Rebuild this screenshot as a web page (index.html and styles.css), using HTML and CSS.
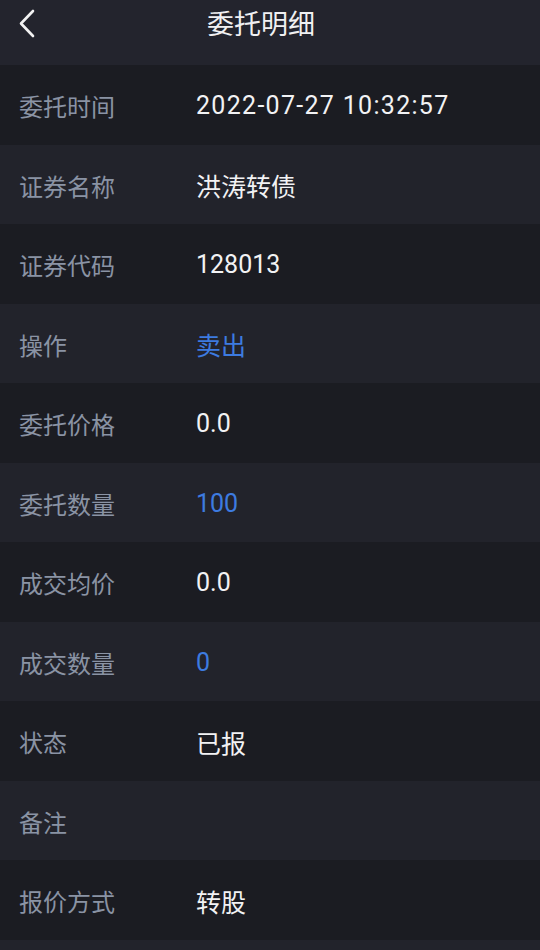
FILE: index.html
```html
<!DOCTYPE html>
<html lang="zh-CN">
<head>
    <meta charset="utf-8">
    <title>委托明细</title>
    <link rel="stylesheet" href="styles.css">
</head>
<body>
    <div class="nav-bar">
        <span class="back">
            <svg width="20" height="30" viewBox="0 0 20 30">
                <path d="M16 2 L4 14.5 L16 27" fill="none" stroke="#f2f2f2" stroke-width="2.6" stroke-linecap="round" stroke-linejoin="round"/>
            </svg>
        </span>
        <h1>委托明细</h1>
    </div>

    <div class="detail-list">
        <div class="row"><span class="label">委托时间</span><span class="value time">2022-07-27 10:32:57</span></div>
        <div class="row"><span class="label">证券名称</span><span class="value">洪涛转债</span></div>
        <div class="row"><span class="label">证券代码</span><span class="value">128013</span></div>
        <div class="row"><span class="label">操作</span><span class="value blue">卖出</span></div>
        <div class="row"><span class="label">委托价格</span><span class="value">0.0</span></div>
        <div class="row"><span class="label">委托数量</span><span class="value blue">100</span></div>
        <div class="row"><span class="label">成交均价</span><span class="value">0.0</span></div>
        <div class="row"><span class="label">成交数量</span><span class="value blue">0</span></div>
        <div class="row"><span class="label">状态</span><span class="value">已报</span></div>
        <div class="row"><span class="label">备注</span><span class="value"></span></div>
        <div class="row"><span class="label">报价方式</span><span class="value">转股</span></div>
    </div>
</body>
</html>
```

FILE: styles.css
```css
body {
    margin: 0;
    background-color: #22232b;
    font-family: Roboto, "Noto Sans CJK SC", sans-serif;
    color: #f0f0f2;
}
.nav-bar {
    height: 65px;
    background-color: #23242d;
    display: flex;
    align-items: flex-start;
    justify-content: center;
    position: relative;
}
.nav-bar h1 {
    margin: 0 18px 0 0;
    padding-top: 6px;
    font-size: 27px;
    font-weight: normal;
    line-height: 38px;
    color: #f0f0f2;
}
.back {
    position: absolute;
    left: 17px;
    top: 9px;
    line-height: 0;
}
.row {
    height: 79.5px;
    box-sizing: border-box;
    padding-top: 2px;
    display: flex;
    align-items: center;
    font-size: 24px;
}
.row:nth-child(odd) {
    background-color: #1b1c22;
}
.row:nth-child(even) {
    background-color: #22232b;
}
.label {
    width: 177px;
    padding-left: 19px;
    color: #8a93a4;
}
.value {
    font-size: 25px;
    color: #f2f2f4;
}
.value.time {
    letter-spacing: 1.3px;
}
.value.blue {
    color: #3d7be0;
}
```
